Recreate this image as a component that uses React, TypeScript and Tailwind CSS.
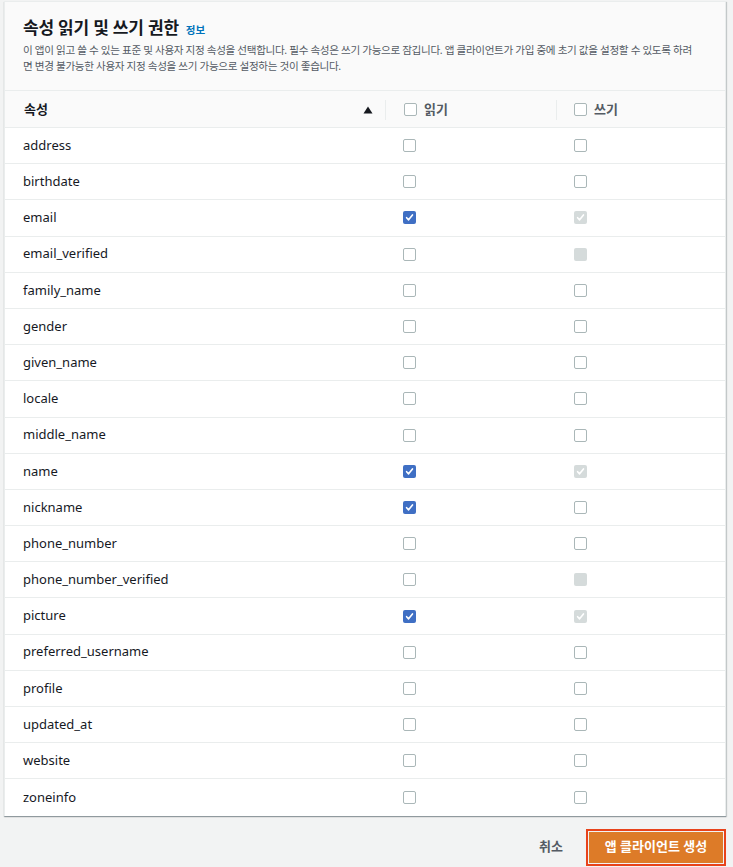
import React from "react";

type Box = "off" | "on" | "lockOn" | "lockOff";

const rows: { name: string; read: Box; write: Box }[] = [
  { name: "address", read: "off", write: "off" },
  { name: "birthdate", read: "off", write: "off" },
  { name: "email", read: "on", write: "lockOn" },
  { name: "email_verified", read: "off", write: "lockOff" },
  { name: "family_name", read: "off", write: "off" },
  { name: "gender", read: "off", write: "off" },
  { name: "given_name", read: "off", write: "off" },
  { name: "locale", read: "off", write: "off" },
  { name: "middle_name", read: "off", write: "off" },
  { name: "name", read: "on", write: "lockOn" },
  { name: "nickname", read: "on", write: "off" },
  { name: "phone_number", read: "off", write: "off" },
  { name: "phone_number_verified", read: "off", write: "lockOff" },
  { name: "picture", read: "on", write: "lockOn" },
  { name: "preferred_username", read: "off", write: "off" },
  { name: "profile", read: "off", write: "off" },
  { name: "updated_at", read: "off", write: "off" },
  { name: "website", read: "off", write: "off" },
  { name: "zoneinfo", read: "off", write: "off" },
];

function Check({ state }: { state: Box }) {
  if (state === "on" || state === "lockOn") {
    return (
      <span
        className={
          "flex h-[13px] w-[13px] items-center justify-center rounded-[2px] " +
          (state === "on" ? "bg-[#3f6fc4]" : "bg-[#d5dbdb]")
        }
      >
        <svg width="9" height="9" viewBox="0 0 10 10" fill="none">
          <path d="M1.8 5.2 L4 7.6 L8.3 2.2" stroke="white" strokeWidth="1.8" strokeLinecap="round" strokeLinejoin="round" />
        </svg>
      </span>
    );
  }
  if (state === "lockOff") {
    return <span className="block h-[13px] w-[13px] rounded-[2px] bg-[#d5dbdb]" />;
  }
  return <span className="block h-[13px] w-[13px] rounded-[2px] border border-[#aab7b8] bg-white" />;
}

export default function App() {
  return (
    <div
      className="min-h-[867px] bg-[#f2f3f3] text-[#16191f]"
      style={{ fontFamily: '"Noto Sans", "Noto Sans CJK KR", sans-serif' }}
    >
      <div className="pl-[4px] pr-[7px] pt-px">
        <div className="border-x border-t border-[#eaeded] bg-white shadow-[0_1px_1px_0_rgba(0,28,36,0.3),1px_1px_1px_0_rgba(0,28,36,0.15)]">
          {/* 카드 헤더 */}
          <div className="h-[89px] border-b border-[#eaeded] bg-[#fafafa] px-[18px] pt-[14px]">
            <div className="flex items-baseline gap-[7px]">
              <h2 className="text-[17px] font-bold leading-[24px] tracking-[-0.2px]">속성 읽기 및 쓰기 권한</h2>
              <span className="text-[10.5px] font-bold text-[#0073bb]">정보</span>
            </div>
            <p className="mt-[2px] whitespace-nowrap text-[10.6px] leading-[16px] tracking-[-0.35px] text-[#545b64]">
              이 앱이 읽고 쓸 수 있는 표준 및 사용자 지정 속성을 선택합니다. 필수 속성은 쓰기 가능으로 잠깁니다. 앱 클라이언트가 가입 중에 초기 값을 설정할 수 있도록 하려
              <br />
              면 변경 불가능한 사용자 지정 속성을 쓰기 가능으로 설정하는 것이 좋습니다.
            </p>
          </div>

          {/* 테이블 헤더 */}
          <div className="grid h-[37px] grid-cols-[380px_171px_1fr] border-b border-[#eaeded] bg-[#fafafa] text-[13px] font-bold">
            <div className="flex items-center justify-between pl-[19px] pr-[12px]">
              <span>속성</span>
              <svg width="10" height="8" viewBox="0 0 10 8">
                <path d="M5 0.5 L9.5 7.5 L0.5 7.5 Z" fill="#16191f" />
              </svg>
            </div>
            <div className="my-[9px] flex items-center gap-[7px] border-l border-[#eaeded] pl-[18px] text-[#545b64]">
              <Check state="off" />
              <span>읽기</span>
            </div>
            <div className="my-[9px] flex items-center gap-[7px] border-l border-[#eaeded] pl-[17px] text-[#545b64]">
              <Check state="off" />
              <span>쓰기</span>
            </div>
          </div>

          {/* 테이블 본문 */}
          {rows.map((r, i) => (
            <div
              key={r.name}
              className={
                "grid h-[36.2px] grid-cols-[380px_171px_1fr] items-center text-[13px] " +
                (i < rows.length - 1 ? "border-b border-[#eaeded]" : "")
              }
            >
              <div className="pl-[18px]">{r.name}</div>
              <div className="pl-[18px]">
                <Check state={r.read} />
              </div>
              <div className="pl-[18px]">
                <Check state={r.write} />
              </div>
            </div>
          ))}
        </div>

        {/* 버튼 영역 */}
        <div className="mt-[13px] flex items-center justify-end gap-[23px]">
          <button className="text-[13px] font-bold text-[#545b64]">취소</button>
          <div className="border-[2px] border-[#e8431b] p-px">
            <button className="h-[31px] w-[134px] bg-[#dd7b28] text-[13px] font-bold text-white">
              앱 클라이언트 생성
            </button>
          </div>
        </div>
      </div>
    </div>
  );
}
